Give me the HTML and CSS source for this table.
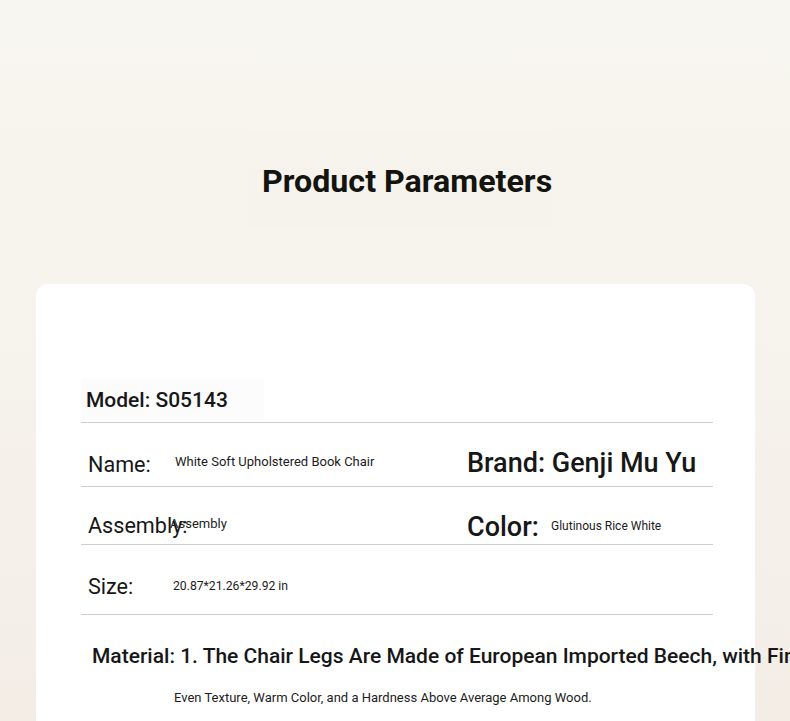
FILE: index.html
```html
<!DOCTYPE html>
<html lang="en">
<head>
<meta charset="utf-8">
<title>Product Parameters</title>
<link rel="stylesheet" href="styles.css">
</head>
<body>
<div class="page">
  <header class="title-wrap">
    <h1 class="title">Product Parameters</h1>
  </header>
  <section class="card">
    <div class="row row-model">
      <div class="cell cell-model"><span class="label label-model">Model: S05143</span></div>
    </div>
    <div class="row row-name">
      <div class="cell cell-left">
        <span class="label label-name">Name:</span>
        <span class="value value-name">White Soft Upholstered Book Chair</span>
      </div>
      <div class="cell cell-right">
        <span class="label label-brand">Brand: Genji Mu Yu</span>
      </div>
    </div>
    <div class="row row-assembly">
      <div class="cell cell-left">
        <span class="label label-assembly">Assembly:</span>
        <span class="value value-assembly">Assembly</span>
      </div>
      <div class="cell cell-right">
        <span class="label label-color">Color:</span>
        <span class="value value-color">Glutinous Rice White</span>
      </div>
    </div>
    <div class="row row-size">
      <div class="cell cell-left">
        <span class="label label-size">Size:</span>
        <span class="value value-size">20.87*21.26*29.92 in</span>
      </div>
    </div>
    <div class="material">
      <p class="material-line">Material: 1. The Chair Legs Are Made of European Imported Beech, with Fine Grain,</p>
      <p class="material-sub">Even Texture, Warm Color, and a Hardness Above Average Among Wood.</p>
    </div>
  </section>
</div>
</body>
</html>
```

FILE: styles.css
```css
html, body {
  margin: 0;
  padding: 0;
  overflow: hidden;
  height: 100%;
}
body {
  font-family: Roboto, "Liberation Sans", sans-serif;
  color: #161616;
  background: linear-gradient(180deg, #f8f6f0 0%, #f6f2ec 50%, #f3ede6 100%);
}
.page {
  width: 790px;
  padding-top: 132px;
}
.title-wrap {
  margin-left: 248px;
  width: 304px;
  height: 96px;
  display: flex;
  align-items: center;
  background: rgba(240, 236, 226, 0.12);
}
.title {
  margin: 2px 0 0 14px;
  font-size: 32.2px;
  font-weight: 700;
  line-height: 38px;
  color: #131310;
  white-space: nowrap;
}
.card {
  margin: 56px 35px 0 36px;
  background: #ffffff;
  border-radius: 12px;
  padding: 93px 42px 0 45px;
  height: 520px;
}
.row {
  display: flex;
  border-bottom: 1px solid #cdcdcd;
}
.row-model { height: 45px; align-items: center; }
.row-name { height: 46px; padding-top: 17px; align-items: center; }
.row-assembly { height: 38px; padding-top: 19px; align-items: center; }
.row-size { height: 56px; padding-top: 13px; align-items: center; }
.cell {
  display: flex;
  align-items: center;
}
.cell-model {
  padding-left: 5px;
  width: 178px;
  height: 41px;
  background: #fcfcfc;
}
.cell-left {
  width: 386px;
  padding-left: 7px;
  box-sizing: border-box;
}
.cell-right {
  flex: 1;
}
.label {
  font-size: 21.6px;
  line-height: 26px;
  white-space: nowrap;
  color: #171717;
}
.label-model { font-weight: 500; font-size: 21px; }
.label-name { width: 87px; flex: none; position: relative; top: 2px; }
.label-assembly { width: 82px; flex: none; overflow: visible; position: relative; top: 1px; }
.label-size { width: 85px; flex: none; position: relative; top: 1px; }
.label-brand { font-size: 27px; line-height: 30px; font-weight: 500; }
.label-color { font-size: 27px; line-height: 30px; font-weight: 500; width: 84px; flex: none; position: relative; top: 2px; }
.value {
  font-size: 13px;
  line-height: 16px;
  white-space: nowrap;
  color: #1c1c1c;
}
.value-name { position: relative; top: -1px; }
.value-assembly { position: relative; top: -1px; }
.value-size { font-size: 12.2px; }
.value-color { font-size: 12px; position: relative; top: 1px; }
.material {
  padding-top: 28px;
}
.material-line {
  margin: 0 0 0 11px;
  font-size: 21px;
  font-weight: 500;
  line-height: 26px;
  white-space: nowrap;
  color: #171717;
}
.material-sub {
  margin: 21px 0 0 93px;
  font-size: 13px;
  line-height: 16px;
  white-space: nowrap;
  color: #1c1c1c;
}
```
